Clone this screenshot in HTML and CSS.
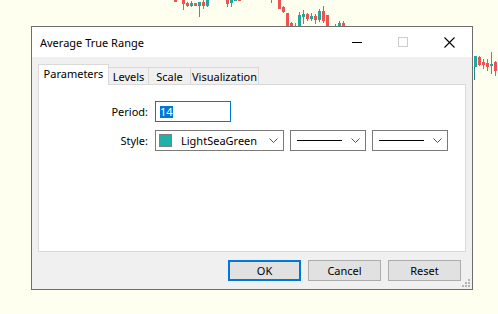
FILE: index.html
```html
<!DOCTYPE html>
<html lang="en">
<head>
    <meta charset="UTF-8">
    <title>Average True Range</title>
    <link rel="stylesheet" href="styles.css">
</head>
<body>
    <!-- chart behind the dialog -->
    <svg class="chart" width="498" height="314" viewBox="0 0 498 314">
        <g class="wick">
            <rect x="183" y="0" width="1" height="10" fill="#ef5350"/>
            <rect x="187" y="2" width="1" height="5" fill="#ef5350"/>
            <rect x="191" y="1" width="1" height="6" fill="#26a69a"/>
            <rect x="199" y="2" width="1" height="15" fill="#26a69a"/>
            <rect x="203" y="0" width="1" height="9" fill="#ef5350"/>
            <rect x="207" y="0" width="1" height="7" fill="#26a69a"/>
            <rect x="227" y="0" width="1" height="7" fill="#ef5350"/>
            <rect x="231" y="0" width="1" height="7" fill="#26a69a"/>
            <rect x="271" y="0" width="1" height="3" fill="#ef5350"/>
            <rect x="283" y="6" width="1" height="7" fill="#ef5350"/>
            <rect x="291" y="22" width="1" height="4" fill="#ef5350"/>
            <rect x="295" y="23" width="1" height="3" fill="#ef5350"/>
            <rect x="299" y="12" width="1" height="14" fill="#26a69a"/>
            <rect x="303" y="10" width="1" height="14" fill="#26a69a"/>
            <rect x="307" y="13" width="1" height="8" fill="#ef5350"/>
            <rect x="311" y="13" width="1" height="8" fill="#26a69a"/>
            <rect x="315" y="14" width="1" height="10" fill="#ef5350"/>
            <rect x="319" y="9" width="1" height="13" fill="#26a69a"/>
            <rect x="323" y="6" width="1" height="17" fill="#ef5350"/>
            <rect x="335" y="24" width="1" height="2" fill="#26a69a"/>
            <rect x="339" y="21" width="1" height="5" fill="#26a69a"/>
            <rect x="343" y="21" width="1" height="5" fill="#ef5350"/>
            <rect x="474" y="56" width="1" height="24" fill="#1f8a80"/>
            <rect x="479" y="56" width="1" height="10" fill="#ef5350"/>
            <rect x="483" y="59" width="1" height="10" fill="#ef5350"/>
            <rect x="487" y="59" width="1" height="12" fill="#ef5350"/>
            <rect x="491" y="52" width="1" height="22" fill="#26a69a"/>
            <rect x="495" y="61" width="1" height="15" fill="#ef5350"/>
        </g>
        <g class="body">
            <rect x="174" y="0" width="3" height="2" fill="#ef5350"/>
            <rect x="182" y="0" width="3" height="4" fill="#ef5350"/>
            <rect x="186" y="3" width="3" height="3" fill="#ef5350"/>
            <rect x="190" y="3" width="3" height="3" fill="#26a69a"/>
            <rect x="194" y="3" width="3" height="3" fill="#ef5350"/>
            <rect x="198" y="2" width="3" height="4" fill="#26a69a"/>
            <rect x="202" y="2" width="3" height="4" fill="#ef5350"/>
            <rect x="206" y="0" width="3" height="6" fill="#26a69a"/>
            <rect x="226" y="0" width="3" height="4" fill="#ef5350"/>
            <rect x="230" y="0" width="3" height="3" fill="#26a69a"/>
            <rect x="234" y="0" width="3" height="1" fill="#26a69a"/>
            <rect x="238" y="0" width="3" height="1" fill="#ef5350"/>
            <rect x="278" y="0" width="3" height="9" fill="#ef5350"/>
            <rect x="282" y="7" width="3" height="5" fill="#ef5350"/>
            <rect x="286" y="13" width="3" height="13" fill="#ef5350"/>
            <rect x="290" y="23" width="3" height="3" fill="#ef5350"/>
            <rect x="298" y="15" width="3" height="11" fill="#26a69a"/>
            <rect x="302" y="14" width="3" height="3" fill="#26a69a"/>
            <rect x="306" y="14" width="3" height="5" fill="#ef5350"/>
            <rect x="310" y="16" width="3" height="3" fill="#26a69a"/>
            <rect x="314" y="16" width="3" height="4" fill="#ef5350"/>
            <rect x="318" y="11" width="3" height="9" fill="#26a69a"/>
            <rect x="322" y="11" width="3" height="10" fill="#ef5350"/>
            <rect x="326" y="15" width="3" height="11" fill="#ef5350"/>
            <rect x="338" y="23" width="3" height="3" fill="#26a69a"/>
            <rect x="342" y="23" width="3" height="3" fill="#ef5350"/>
            <rect x="474" y="56" width="3" height="11" fill="#26a69a"/>
            <rect x="478" y="57" width="3" height="8" fill="#ef5350"/>
            <rect x="482" y="62" width="3" height="3" fill="#ef5350"/>
            <rect x="486" y="63" width="3" height="4" fill="#ef5350"/>
            <rect x="490" y="64" width="3" height="2" fill="#26a69a"/>
            <rect x="494" y="62" width="3" height="9" fill="#ef5350"/>
        </g>
    </svg>

    <div class="dialog">
        <div class="titlebar">
            <span class="title">Average True Range</span>
            <div class="controls">
                <span class="ctl">
                    <svg width="10" height="10" viewBox="0 0 10 10"><rect x="0" y="5" width="10" height="1" fill="#000"/></svg>
                </span>
                <span class="ctl">
                    <svg width="10" height="10" viewBox="0 0 10 10"><rect x="0.5" y="0.5" width="9" height="9" fill="none" stroke="#cccccc"/></svg>
                </span>
                <span class="ctl">
                    <svg width="11" height="11" viewBox="0 0 11 11"><path d="M0.5 0.5 L10.5 10.5 M10.5 0.5 L0.5 10.5" stroke="#000" stroke-width="1.1" fill="none"/></svg>
                </span>
            </div>
        </div>

        <div class="main">
            <div class="tabs">
                <div class="tab active" style="width:71px">Parameters</div>
                <div class="tab" style="width:41px">Levels</div>
                <div class="tab" style="width:43px">Scale</div>
                <div class="tab" style="width:69px">Visualization</div>
            </div>
            <div class="panel">
                <div class="form">
                    <label>Period:</label>
                    <div class="field"><span class="sel">14</span></div>
                    <label>Style:</label>
                    <div class="combos">
                        <div class="combo color">
                            <span class="swatch"></span>
                            <span class="name">LightSeaGreen</span>
                            <svg class="chev" width="9" height="5" viewBox="0 0 9 5"><polyline points="0.5,0.5 4.5,4.5 8.5,0.5" fill="none" stroke="#555"/></svg>
                        </div>
                        <div class="combo line">
                            <span class="stroke"></span>
                            <svg class="chev" width="9" height="5" viewBox="0 0 9 5"><polyline points="0.5,0.5 4.5,4.5 8.5,0.5" fill="none" stroke="#555"/></svg>
                        </div>
                        <div class="combo line">
                            <span class="stroke"></span>
                            <svg class="chev" width="9" height="5" viewBox="0 0 9 5"><polyline points="0.5,0.5 4.5,4.5 8.5,0.5" fill="none" stroke="#555"/></svg>
                        </div>
                    </div>
                </div>
            </div>
            <div class="buttons">
                <button class="btn default">OK</button>
                <button class="btn">Cancel</button>
                <button class="btn">Reset</button>
            </div>
        </div>

        <svg class="grip" width="8" height="8" viewBox="0 0 8 8">
            <rect x="6" y="0" width="2" height="2" fill="#b5b5b5"/>
            <rect x="3" y="3" width="2" height="2" fill="#b5b5b5"/>
            <rect x="6" y="3" width="2" height="2" fill="#b5b5b5"/>
            <rect x="0" y="6" width="2" height="2" fill="#b5b5b5"/>
            <rect x="3" y="6" width="2" height="2" fill="#b5b5b5"/>
            <rect x="6" y="6" width="2" height="2" fill="#b5b5b5"/>
        </svg>
    </div>
</body>
</html>
```

FILE: styles.css
```css
* {
    margin: 0;
    padding: 0;
    box-sizing: border-box;
}
body {
    background: #fffff0;
    font-family: "Noto Sans", "Open Sans", sans-serif;
    font-size: 11px;
    color: #000;
    height: 314px;
    overflow: hidden;
    padding: 26px 0 0 31px;
}
.chart {
    position: absolute;
    top: 0;
    left: 0;
    z-index: -1;
}
.dialog {
    position: relative;
    width: 442px;
    height: 264px;
    border: 1px solid #6e6e6e;
    background: #f0f0f0;
    display: flex;
    flex-direction: column;
}
.titlebar {
    height: 30px;
    background: #fff;
    display: flex;
    align-items: center;
    padding-left: 8px;
}
.title {
    flex: 1;
}
.controls {
    display: flex;
    height: 100%;
}
.ctl {
    width: 46px;
    display: flex;
    align-items: center;
    justify-content: center;
}
.main {
    flex: 1;
    padding: 7px 6px 0;
    display: flex;
    flex-direction: column;
}
.tabs {
    display: flex;
    align-items: flex-end;
    height: 20px;
    position: relative;
    z-index: 1;
}
.tab {
    height: 17px;
    margin-left: -1px;
    border: 1px solid #d9d9d9;
    border-bottom: none;
    background: #f0f0f0;
    display: flex;
    align-items: center;
    justify-content: center;
}
.tab:first-child {
    margin-left: 0;
}
.tab.active {
    height: 21px;
    margin-bottom: -1px;
    background: #fff;
    padding-bottom: 3px;
}
.panel {
    height: 168px;
    background: #fff;
    border: 1px solid #d9d9d9;
    padding-top: 16px;
}
.form {
    display: grid;
    grid-template-columns: 109px auto;
    column-gap: 7px;
    row-gap: 8px;
    align-items: center;
}
.form label {
    text-align: right;
}
.field {
    width: 76px;
    height: 21px;
    border: 1px solid #0078d7;
    display: flex;
    align-items: center;
    padding-left: 4px;
}
.sel {
    background: #0078d7;
    color: #fff;
    line-height: 12px;
}
.combos {
    display: flex;
    gap: 6px;
}
.combo {
    height: 21px;
    border: 1px solid #7a7a7a;
    background: #fff;
    display: flex;
    align-items: center;
}
.combo.color {
    width: 129px;
    padding-left: 3px;
}
.combo.line {
    width: 76px;
    padding-left: 6px;
}
.swatch {
    width: 13px;
    height: 13px;
    background: #20b2aa;
    border: 1px solid #808080;
}
.name {
    margin-left: 9px;
}
.stroke {
    width: 45px;
    height: 1px;
    background: #000;
}
.chev {
    margin-left: auto;
    margin-right: 5px;
}
.buttons {
    display: flex;
    justify-content: flex-end;
    gap: 7px;
    padding: 8px 5px 0 0;
}
.btn {
    width: 73px;
    height: 21px;
    background: #e1e1e1;
    border: 1px solid #adadad;
    font: inherit;
    color: #000;
}
.btn.default {
    border: 2px solid #0078d7;
}
.grip {
    position: absolute;
    right: 2px;
    bottom: 2px;
}
```
